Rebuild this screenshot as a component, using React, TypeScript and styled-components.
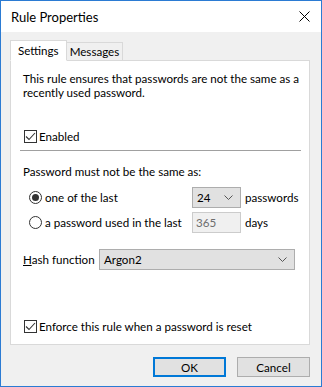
import React from 'react';
import styled, { createGlobalStyle } from 'styled-components';

const BORDER_BLUE = '#2b7bd3';
const PANEL_BORDER = '#d9d9d9';
const CONTROL_BG = '#e1e1e1';
const CONTROL_BORDER = '#adadad';
const INK = '#000000';
const MARK = '#333333';

const GlobalStyle = createGlobalStyle`
  html, body {
    margin: 0;
    padding: 0;
    background: #ffffff;
  }
  body {
    font-family: Lato, 'Liberation Sans', Arial, sans-serif;
    font-size: 11.6px;
    color: ${INK};
  }
  * {
    box-sizing: border-box;
  }
`;

const Window = styled.div`
  width: 322px;
  height: 387px;
  border: 1px solid ${BORDER_BLUE};
  display: flex;
  flex-direction: column;
  background: #f0f0f0;
  white-space: nowrap;
`;

const TitleBar = styled.div`
  height: 31px;
  background: #ffffff;
  display: flex;
  align-items: center;
  justify-content: space-between;
  padding: 0 11px 0 10px;
  font-size: 13px;
`;

const Body = styled.div`
  flex: 1;
  display: flex;
  flex-direction: column;
  padding: 8px 11px 0 9px;
`;

const TabStrip = styled.div`
  display: flex;
  align-items: flex-end;
  height: 21px;
  position: relative;
  z-index: 1;
`;

const Tab = styled.div<{ active?: boolean }>`
  height: ${({ active }) => (active ? '21px' : '19px')};
  padding: ${({ active }) => (active ? '0 7px 0 7px' : '0 3px 0 3px')};
  margin-left: ${({ active }) => (active ? '0' : '-1px')};
  border: 1px solid ${PANEL_BORDER};
  border-bottom: ${({ active }) => (active ? '1px solid #ffffff' : `1px solid ${PANEL_BORDER}`)};
  background: ${({ active }) => (active ? '#ffffff' : '#f0f0f0')};
  display: flex;
  align-items: center;
  z-index: ${({ active }) => (active ? 2 : 1)};
`;

const Panel = styled.div`
  margin-top: -1px;
  height: 285px;
  border: 1px solid ${PANEL_BORDER};
  background: #ffffff;
  display: flex;
  flex-direction: column;
  padding: 0 8px 0 12px;
`;

const Description = styled.div`
  margin-top: 11px;
  line-height: 14px;
  height: 28px;
`;

const CheckRow = styled.label<{ top: number }>`
  margin-top: ${({ top }) => top}px;
  height: 16px;
  display: flex;
  align-items: center;
  gap: 2px;
  padding-left: 1px;
`;

const Box = styled.span`
  width: 13px;
  height: 13px;
  border: 1px solid ${MARK};
  background: #ffffff;
  display: flex;
  align-items: center;
  justify-content: center;
`;

const Separator = styled.div`
  margin: 6px 0 0 -3px;
  height: 1px;
  background: #a0a0a0;
`;

const SectionLabel = styled.div`
  margin-top: 13px;
  height: 16px;
  line-height: 16px;
`;

const OptionRow = styled.div<{ top: number }>`
  margin-top: ${({ top }) => top}px;
  height: 21px;
  padding-left: 6px;
  display: grid;
  grid-template-columns: 159px 49px auto;
  column-gap: 4px;
  align-items: center;
`;

const RadioLabel = styled.label`
  display: flex;
  align-items: center;
  gap: 3px;
`;

const Radio = styled.span<{ checked?: boolean }>`
  width: 13px;
  height: 13px;
  border-radius: 50%;
  border: 1px solid ${MARK};
  background: #ffffff;
  display: flex;
  align-items: center;
  justify-content: center;
  &::after {
    content: '';
    width: 7px;
    height: 7px;
    border-radius: 50%;
    background: ${({ checked }) => (checked ? MARK : 'transparent')};
  }
`;

const Select = styled.div`
  height: 21px;
  background: ${CONTROL_BG};
  border: 1px solid ${CONTROL_BORDER};
  display: flex;
  align-items: center;
  justify-content: space-between;
  padding: 0 7px 0 4px;
`;

const DisabledInput = styled.div`
  height: 21px;
  background: #f0f0f0;
  border: 1px solid #cccccc;
  color: #6d6d6d;
  display: flex;
  align-items: center;
  padding-left: 3px;
`;

const HashRow = styled.div`
  margin-top: 16px;
  height: 21px;
  display: grid;
  grid-template-columns: 76px 196px;
  align-items: center;
`;

const ButtonBar = styled.div`
  margin-top: 12px;
  display: flex;
  justify-content: flex-end;
  gap: 11px;
`;

const Button = styled.button<{ primary?: boolean }>`
  width: 73px;
  height: 20px;
  padding: 0;
  font-family: inherit;
  font-size: 11.6px;
  color: ${INK};
  background: ${CONTROL_BG};
  border: ${({ primary }) => (primary ? '2px solid #0078d7' : `1px solid ${CONTROL_BORDER}`)};
  border-radius: 0;
`;

const Chevron = () => (
  <svg width="9" height="5" viewBox="0 0 9 5">
    <path d="M0.5 0.5 L4.5 4.5 L8.5 0.5" fill="none" stroke="#555" strokeWidth="1" />
  </svg>
);

const CheckMark = () => (
  <svg width="11" height="11" viewBox="0 0 11 11">
    <path d="M1 5.5 L4 8.5 L10 2" fill="none" stroke={MARK} strokeWidth="1.1" />
  </svg>
);

const CloseIcon = () => (
  <svg width="11" height="11" viewBox="0 0 11 11">
    <path d="M0.5 0.5 L10.5 10.5 M10.5 0.5 L0.5 10.5" stroke="#000" strokeWidth="1" />
  </svg>
);

const App = (): JSX.Element => {
  return (
    <>
      <GlobalStyle />
      <Window>
        <TitleBar>
          <span>Rule Properties</span>
          <CloseIcon />
        </TitleBar>
        <Body>
          <TabStrip>
            <Tab active>Settings</Tab>
            <Tab>Messages</Tab>
          </TabStrip>
          <Panel>
            <Description>
              This rule ensures that passwords are not the same as a
              <br />
              recently used password.
            </Description>
            <CheckRow top={28}>
              <Box>
                <CheckMark />
              </Box>
              Enabled
            </CheckRow>
            <Separator />
            <SectionLabel>Password must not be the same as:</SectionLabel>
            <OptionRow top={7}>
              <RadioLabel>
                <Radio checked />
                one of the last
              </RadioLabel>
              <Select>
                <span>24</span>
                <Chevron />
              </Select>
              <span>passwords</span>
            </OptionRow>
            <OptionRow top={4}>
              <RadioLabel>
                <Radio />
                a password used in the last
              </RadioLabel>
              <DisabledInput>365</DisabledInput>
              <span>days</span>
            </OptionRow>
            <HashRow>
              <span>
                <u>H</u>ash function
              </span>
              <Select>
                <span>Argon2</span>
                <Chevron />
              </Select>
            </HashRow>
            <CheckRow top={48}>
              <Box>
                <CheckMark />
              </Box>
              Enforce this rule when a password is reset
            </CheckRow>
          </Panel>
          <ButtonBar>
            <Button primary>OK</Button>
            <Button>Cancel</Button>
          </ButtonBar>
        </Body>
      </Window>
    </>
  );
};

export default App;
